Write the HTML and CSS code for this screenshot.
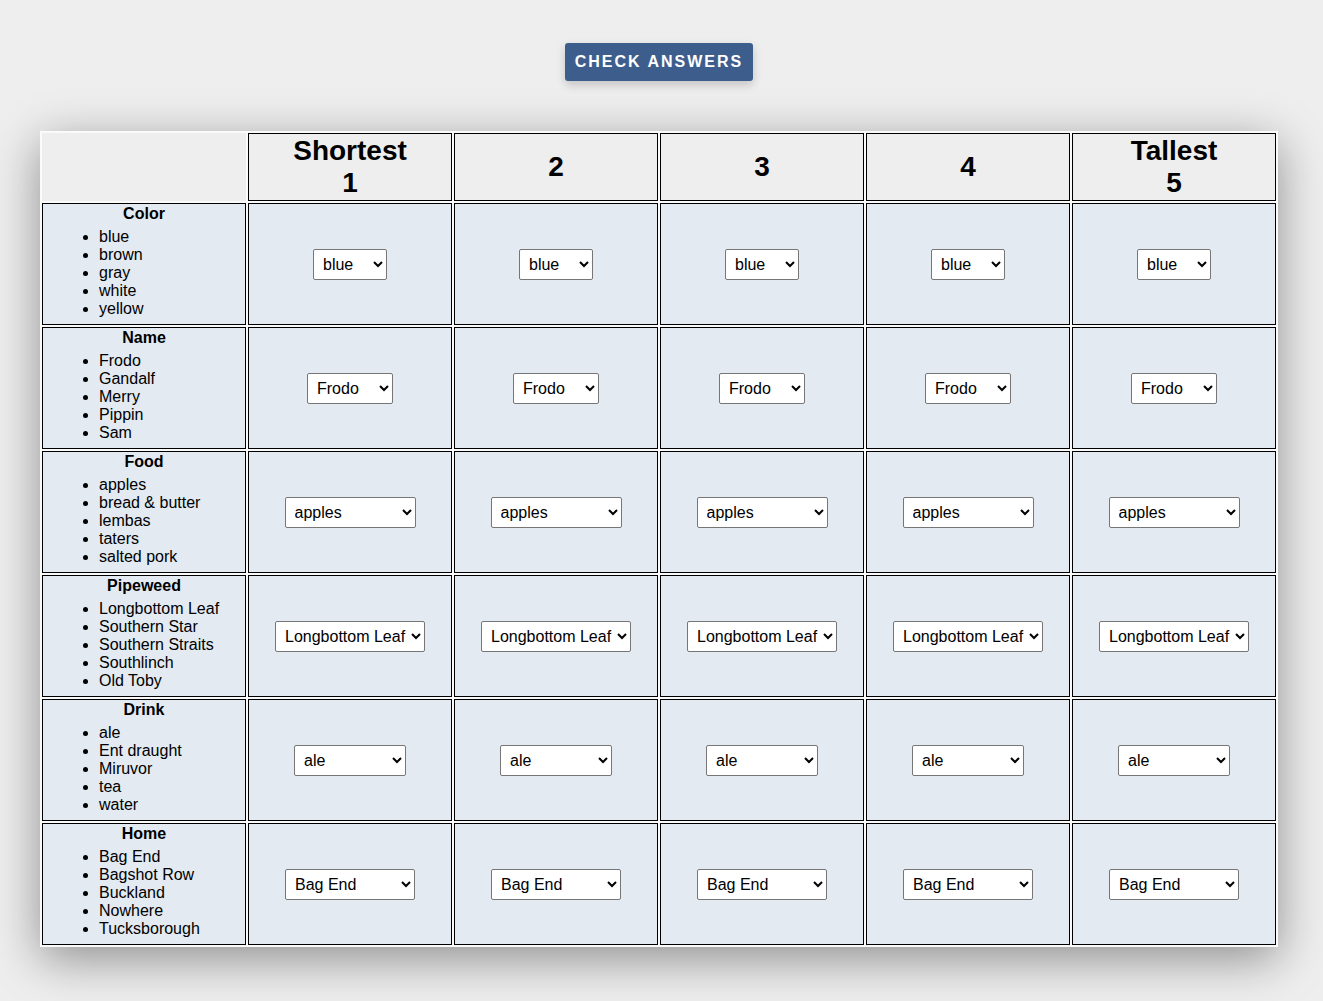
FILE: index.html
```html
<!DOCTYPE html>
<html>
<head>
<meta charset="utf-8">
<link rel="stylesheet" href="styles.css">
</head>
<body>
<div class="top">
  <button class="check">CHECK ANSWERS</button>
</div>
<table class="grid">
  <tr>
    <th class="corner"></th>
    <th>Shortest<br>1</th>
    <th>2</th>
    <th>3</th>
    <th>4</th>
    <th>Tallest<br>5</th>
  </tr>
  <tr>
    <td class="cat"><div class="title">Color</div><ul><li>blue</li><li>brown</li><li>gray</li><li>white</li><li>yellow</li></ul></td>
    <td><select><option>blue</option><option>brown</option><option>gray</option><option>white</option><option>yellow</option></select></td>
    <td><select><option>blue</option><option>brown</option><option>gray</option><option>white</option><option>yellow</option></select></td>
    <td><select><option>blue</option><option>brown</option><option>gray</option><option>white</option><option>yellow</option></select></td>
    <td><select><option>blue</option><option>brown</option><option>gray</option><option>white</option><option>yellow</option></select></td>
    <td><select><option>blue</option><option>brown</option><option>gray</option><option>white</option><option>yellow</option></select></td>
  </tr>
  <tr>
    <td class="cat"><div class="title">Name</div><ul><li>Frodo</li><li>Gandalf</li><li>Merry</li><li>Pippin</li><li>Sam</li></ul></td>
    <td><select><option>Frodo</option><option>Gandalf</option><option>Merry</option><option>Pippin</option><option>Sam</option></select></td>
    <td><select><option>Frodo</option><option>Gandalf</option><option>Merry</option><option>Pippin</option><option>Sam</option></select></td>
    <td><select><option>Frodo</option><option>Gandalf</option><option>Merry</option><option>Pippin</option><option>Sam</option></select></td>
    <td><select><option>Frodo</option><option>Gandalf</option><option>Merry</option><option>Pippin</option><option>Sam</option></select></td>
    <td><select><option>Frodo</option><option>Gandalf</option><option>Merry</option><option>Pippin</option><option>Sam</option></select></td>
  </tr>
  <tr>
    <td class="cat"><div class="title">Food</div><ul><li>apples</li><li>bread &amp; butter</li><li>lembas</li><li>taters</li><li>salted pork</li></ul></td>
    <td><select><option>apples</option><option>bread &amp; butter</option><option>lembas</option><option>taters</option><option>salted pork</option></select></td>
    <td><select><option>apples</option><option>bread &amp; butter</option><option>lembas</option><option>taters</option><option>salted pork</option></select></td>
    <td><select><option>apples</option><option>bread &amp; butter</option><option>lembas</option><option>taters</option><option>salted pork</option></select></td>
    <td><select><option>apples</option><option>bread &amp; butter</option><option>lembas</option><option>taters</option><option>salted pork</option></select></td>
    <td><select><option>apples</option><option>bread &amp; butter</option><option>lembas</option><option>taters</option><option>salted pork</option></select></td>
  </tr>
  <tr>
    <td class="cat"><div class="title">Pipeweed</div><ul><li>Longbottom Leaf</li><li>Southern Star</li><li>Southern Straits</li><li>Southlinch</li><li>Old Toby</li></ul></td>
    <td><select><option>Longbottom Leaf</option><option>Southern Star</option><option>Southern Straits</option><option>Southlinch</option><option>Old Toby</option></select></td>
    <td><select><option>Longbottom Leaf</option><option>Southern Star</option><option>Southern Straits</option><option>Southlinch</option><option>Old Toby</option></select></td>
    <td><select><option>Longbottom Leaf</option><option>Southern Star</option><option>Southern Straits</option><option>Southlinch</option><option>Old Toby</option></select></td>
    <td><select><option>Longbottom Leaf</option><option>Southern Star</option><option>Southern Straits</option><option>Southlinch</option><option>Old Toby</option></select></td>
    <td><select><option>Longbottom Leaf</option><option>Southern Star</option><option>Southern Straits</option><option>Southlinch</option><option>Old Toby</option></select></td>
  </tr>
  <tr>
    <td class="cat"><div class="title">Drink</div><ul><li>ale</li><li>Ent draught</li><li>Miruvor</li><li>tea</li><li>water</li></ul></td>
    <td><select><option>ale</option><option>Ent draught</option><option>Miruvor</option><option>tea</option><option>water</option></select></td>
    <td><select><option>ale</option><option>Ent draught</option><option>Miruvor</option><option>tea</option><option>water</option></select></td>
    <td><select><option>ale</option><option>Ent draught</option><option>Miruvor</option><option>tea</option><option>water</option></select></td>
    <td><select><option>ale</option><option>Ent draught</option><option>Miruvor</option><option>tea</option><option>water</option></select></td>
    <td><select><option>ale</option><option>Ent draught</option><option>Miruvor</option><option>tea</option><option>water</option></select></td>
  </tr>
  <tr>
    <td class="cat"><div class="title">Home</div><ul><li>Bag End</li><li>Bagshot Row</li><li>Buckland</li><li>Nowhere</li><li>Tucksborough</li></ul></td>
    <td><select><option>Bag End</option><option>Bagshot Row</option><option>Buckland</option><option>Nowhere</option><option>Tucksborough</option></select></td>
    <td><select><option>Bag End</option><option>Bagshot Row</option><option>Buckland</option><option>Nowhere</option><option>Tucksborough</option></select></td>
    <td><select><option>Bag End</option><option>Bagshot Row</option><option>Buckland</option><option>Nowhere</option><option>Tucksborough</option></select></td>
    <td><select><option>Bag End</option><option>Bagshot Row</option><option>Buckland</option><option>Nowhere</option><option>Tucksborough</option></select></td>
    <td><select><option>Bag End</option><option>Bagshot Row</option><option>Buckland</option><option>Nowhere</option><option>Tucksborough</option></select></td>
  </tr>
</table>
</body>
</html>
```
FILE: styles.css
```css
html {
  background: #eeeeee;
}
body {
  margin: 0;
  padding: 43px 0 60px 0;
  font-family: "Liberation Sans", Arial, sans-serif;
  font-size: 16px;
  color: #000;
}
.top {
  display: flex;
  justify-content: center;
  padding-right: 5px;
  margin-bottom: 50px;
}
.check {
  background: #3d5e8d;
  color: #fff;
  border: none;
  border-radius: 3px;
  font-family: "Liberation Sans", Arial, sans-serif;
  font-weight: bold;
  font-size: 16px;
  letter-spacing: 2px;
  height: 38px;
  width: 188px;
  padding: 0;
  box-shadow: 0 4px 10px rgba(0,0,0,0.18);
}
.grid {
  margin-left: 40px;
  width: 1238px;
  table-layout: fixed;
  border-collapse: separate;
  border-spacing: 2px;
  background: #fafafa;
  box-shadow: 0 12px 45px rgba(0,0,0,0.4);
}
.grid th, .grid td {
  border: 1px solid #000;
  padding: 1px;
  text-align: center;
  vertical-align: middle;
}
.grid th {
  background: #eeeeee;
  font-size: 28px;
  font-weight: bold;
  line-height: 32px;
  height: 64px;
}
.grid th.corner {
  border: none;
}
.grid td {
  background: #e3eaf2;
  height: 118px;
}
.grid td.cat {
  text-align: left;
  vertical-align: top;
}
.title {
  font-weight: bold;
  text-align: center;
  line-height: 18px;
}
.cat ul {
  margin: 5px 0;
  padding-left: 55px;
  line-height: 18px;
}
select {
  font-family: "Liberation Sans", Arial, sans-serif;
  font-size: 16px;
  color: #000;
  background: #fff;
  border: 1px solid #767676;
  border-radius: 2px;
  padding: 5px 2px 5px 5px;
}
```
